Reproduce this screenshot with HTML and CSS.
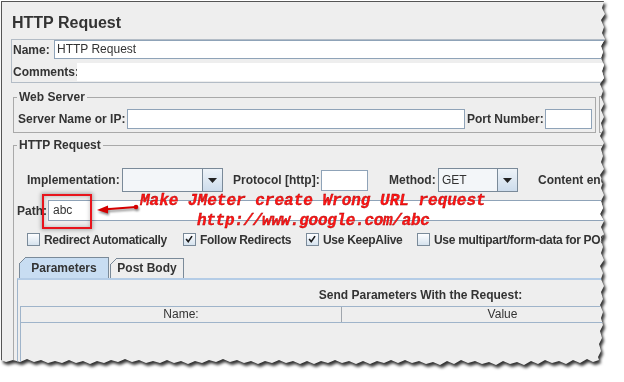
FILE: index.html
```html
<!DOCTYPE html>
<html>
<head>
<meta charset="utf-8">
<link rel="stylesheet" href="styles.css">
</head>
<body>
<div class="wrap">
  <div class="shot">
    <div class="title">HTTP Request</div>
    <div class="namepanel">
      <div class="nrow"><span class="lbl l-name">Name:</span><div class="tf name">HTTP Request</div></div>
      <div class="crow"><span class="lbl l-com">Comments:</span><div class="plain"></div></div>
    </div>
    <div class="servers">
      <fieldset class="grp web">
        <legend>Web Server</legend>
        <div class="srow">
          <span class="lbl l-srv">Server Name or IP:</span><div class="tf grow"></div>
          <span class="lbl l-port">Port Number:</span><div class="tf portf"></div>
        </div>
      </fieldset>
      <div class="timeo"></div>
    </div>
    <fieldset class="grp http">
      <legend>HTTP Request</legend>
      <div class="irow">
        <span class="lbl l-impl">Implementation:</span>
        <div class="combo impl"><div class="cval"></div><div class="cbtn"><svg width="9" height="5" viewBox="0 0 9 5"><path d="M0 0H9L4.5 5Z" fill="#222"/></svg></div></div>
        <span class="lbl l-proto">Protocol [http]:</span><div class="tf protof"></div>
        <span class="lbl l-meth">Method:</span>
        <div class="combo method"><div class="cval">GET</div><div class="cbtn"><svg width="9" height="5" viewBox="0 0 9 5"><path d="M0 0H9L4.5 5Z" fill="#222"/></svg></div></div>
        <span class="lbl l-enc">Content encoding:</span>
      </div>
      <div class="prow"><span class="lbl l-path">Path:</span><div class="tf path">abc</div></div>
      <div class="cbrow">
        <div class="cb cb1"><span class="box"></span>Redirect Automatically</div>
        <div class="cb cb2"><span class="box"><svg viewBox="0 0 13 13" width="11" height="11"><path d="M2.5 6 L5 9 L9.5 2.5" stroke="#1a1a1a" stroke-width="1.9" fill="none"/></svg></span>Follow Redirects</div>
        <div class="cb cb3"><span class="box"><svg viewBox="0 0 13 13" width="11" height="11"><path d="M2.5 6 L5 9 L9.5 2.5" stroke="#1a1a1a" stroke-width="1.9" fill="none"/></svg></span>Use KeepAlive</div>
        <div class="cb cb4"><span class="box"></span>Use multipart/form-data for POST</div>
      </div>
      <div class="tabs">
        <div class="tab sel">Parameters</div>
        <div class="tab t2">Post Body</div>
      </div>
      <div class="tabpanel">
        <div class="sendlbl">Send Parameters With the Request:</div>
        <div class="ptable">
          <div class="thead"><div class="th th1">Name:</div><div class="th th2">Value</div></div>
        </div>
      </div>
    </fieldset>

    <div class="redbox"></div>
    <svg class="arrow" width="48" height="16" viewBox="0 0 48 16">
      <path d="M3 10 L14 5.6 L14 13.6 Z" fill="#d40000"/>
      <path d="M12 9.3 L42 7" stroke="#d40000" stroke-width="2" fill="none"/>
      <circle cx="42" cy="7" r="2.3" fill="#d40000"/>
    </svg>
    <div class="note"><div>Make JMeter create Wrong URL request</div><div class="l2">http://www.google.com/abc</div></div>
  </div>
</div>
</body>
</html>
```
FILE: styles.css
```css
* { box-sizing: border-box; }
html, body { margin: 0; padding: 0; background: #fff; }
body {
  width: 624px; height: 382px; overflow: hidden;
  font-family: "Liberation Sans", Arial, sans-serif;
  font-size: 12px; color: #333;
}
.wrap { padding: 1px 0 0 1px; filter: drop-shadow(2px 3px 1.5px rgba(0,0,0,.8)); }
.shot {
  position: relative; width: 608px; height: 368px; background: #eeeeee;
  border-top: 1px solid #555; border-left: 1px solid #555;
  padding-top: 11px; overflow: hidden;
  clip-path: polygon(0 0, 603px 0, 601px 7px, 604px 13px, 600px 19px, 603px 26px, 601px 32px, 604px 38px, 600px 45px, 602px 51px, 600px 57px, 603px 64px, 601px 70px, 603px 77px, 599px 83px, 602px 90px, 600px 96px, 603px 103px, 600px 109px, 603px 116px, 600px 122px, 602px 129px, 599px 135px, 603px 142px, 600px 148px, 602px 155px, 600px 161px, 603px 168px, 599px 174px, 602px 181px, 600px 187px, 603px 194px, 600px 200px, 602px 207px, 599px 213px, 603px 220px, 600px 226px, 603px 233px, 600px 239px, 602px 246px, 600px 252px, 603px 259px, 599px 265px, 602px 272px, 600px 278px, 603px 285px, 600px 291px, 602px 298px, 599px 304px, 602px 311px, 600px 317px, 602px 324px, 599px 330px, 601px 337px, 598px 343px, 600px 350px, 597px 356px, 598px 359px,
    592px 361px, 586px 358px, 579px 362px, 572px 359px, 565px 363px, 558px 360px, 551px 362px, 544px 359px, 537px 363px, 530px 360px, 523px 364px, 516px 361px, 509px 363px, 502px 360px, 495px 364px, 488px 361px, 481px 363px, 474px 360px, 467px 362px, 460px 359px, 453px 363px, 446px 360px, 439px 364px, 432px 361px, 425px 363px, 418px 360px, 411px 362px, 404px 359px, 397px 362px, 390px 359px, 383px 362px, 376px 360px, 369px 363px, 362px 360px, 355px 363px, 348px 360px, 341px 362px, 334px 359px, 327px 362px, 320px 360px, 313px 363px, 306px 360px, 299px 363px, 292px 360px, 285px 362px, 278px 359px, 271px 362px, 264px 360px, 257px 363px, 250px 360px, 243px 362px, 236px 359px, 229px 361px, 222px 358px, 215px 361px, 208px 359px, 201px 362px, 194px 360px, 187px 363px, 180px 360px, 173px 362px, 166px 359px, 159px 362px, 152px 360px, 145px 362px, 138px 359px, 131px 361px, 124px 358px, 117px 361px, 110px 359px, 103px 362px, 96px 360px, 89px 363px, 82px 360px, 75px 362px, 68px 359px, 61px 362px, 54px 360px, 47px 362px, 40px 359px, 33px 361px, 26px 358px, 19px 361px, 12px 359px, 5px 361px, 0 359px);
}
.title { margin-left: 10px; height: 20px; line-height: 20px; font-size: 16px; font-weight: bold; }
.lbl { font-weight: bold; white-space: nowrap; flex: none; }
.tf { background: #fff; border: 1px solid #8fa3b8; flex: none; }

.namepanel { margin: 6px 0 0 9px; width: 640px; border: 1px solid #b3bcc6; padding: 0 0 1px 1px; }
.nrow { display: flex; align-items: center; height: 19px; }
.l-name { width: 41px; }
.name { flex: 1; height: 19px; padding-left: 2px; line-height: 17px; }
.crow { display: flex; align-items: center; height: 18px; margin-top: 4px; }
.l-com { width: 64px; }
.plain { flex: 1; height: 18px; background: #fff; }

.servers { display: flex; margin: 7px 0 0 11px; gap: 3px; }
fieldset.grp { padding: 0; border: 1px solid #a9a9a9; min-width: 0; }
.grp legend { margin-left: 3px; padding: 0 2px; font-weight: bold; line-height: 14px; font-size: 12px; }
fieldset.web { margin: 0; width: 583px; flex: none; padding-bottom: 3px; }
.timeo { width: 40px; flex: none; margin-top: 6px; height: 37px; border: 1px solid #a9a9a9; }
.srow { display: flex; align-items: center; height: 20px; margin-top: 5px; padding: 0 3px 0 4px; }
.l-srv { width: 109px; }
.grow { flex: 1; height: 20px; }
.l-port { width: 78px; margin-left: 2px; }
.portf { width: 47px; height: 20px; }

fieldset.http { margin: 5px 0 0 11px; width: 610px; height: 240px; }
.irow { display: flex; align-items: center; height: 24px; margin-top: 16px; padding-left: 13px; }
.l-impl { width: 95px; }
.combo { display: flex; height: 24px; border: 1px solid #7a8a99; background: #f3f6f9; flex: none; }
.cval { flex: 1; padding-left: 3px; line-height: 22px; }
.cbtn { width: 20px; border-left: 1px solid #7a8a99; background: linear-gradient(#eef3f8, #cddcec); display: flex; align-items: center; justify-content: center; }
.impl { width: 101px; }
.l-proto { width: 88px; margin-left: 10px; }
.protof { width: 47px; height: 21px; }
.l-meth { width: 49px; margin-left: 21px; }
.method { width: 80px; }
.l-enc { margin-left: 20px; }

.prow { display: flex; align-items: center; height: 21px; margin-top: 8px; padding-left: 3px; }
.l-path { width: 31px; }
.path { flex: 1; height: 21px; padding-left: 4px; line-height: 19px; }

.cbrow { display: flex; align-items: center; height: 17px; margin-top: 10px; padding-left: 13px; }
.cb { display: flex; align-items: center; flex: none; font-weight: bold; font-size: 12px; letter-spacing: -0.3px; white-space: nowrap; }
.cb1 { width: 156px; }
.cb2 { width: 123px; }
.cb3 { width: 111px; }
.box { width: 13px; height: 13px; border: 1px solid #7a8a99; background: linear-gradient(#fdfeff, #d6e2ee); margin-right: 4px; display: flex; align-items: center; justify-content: center; }

.tabs { display: flex; align-items: flex-end; height: 21px; margin-top: 9px; padding-left: 5px; gap: 1px; }
.tab { position: relative; height: 21px; border: 1px solid #7a8a99; border-bottom: none; font-weight: bold; text-align: center; line-height: 20px; background: #eeeeee; }
.tab::before { content: ""; position: absolute; top: -1px; left: -1px; width: 7px; height: 7px; background: linear-gradient(to bottom right, #eeeeee 0 calc(50% - 0.7px), #7a8a99 calc(50% - 0.7px) calc(50% + 0.6px), transparent calc(50% + 0.6px)); }
.sel { width: 90px; background: #c8ddf2; }
.t2 { width: 74px; height: 20px; line-height: 19px; }

.tabpanel { margin-left: 3px; width: 806px; height: 100px; border-top: 2px solid #b4cce6; border-left: 1px solid #9fb4ca; padding-top: 8px; }
.sendlbl { text-align: center; font-weight: bold; line-height: 14px; }
.ptable { margin: 4px 0 0 2px; width: 643px; height: 70px; border-left: 1px solid #9fb4ca; border-top: 1px solid #9fb4ca; }
.thead { display: flex; height: 16px; border-bottom: 1px solid #9fb4ca; }
.th { text-align: center; line-height: 15px; }
.th1 { width: 321px; border-right: 1px solid #a0a6ad; }
.th2 { flex: 1; }

.redbox { position: absolute; left: 40px; top: 192px; width: 50px; height: 35px; border: 2px solid #e8141c; box-shadow: 0 0 4px 1px rgba(0,0,0,.3), inset 0 0 4px rgba(0,0,0,.25); }
.arrow { position: absolute; left: 92px; top: 198px; filter: drop-shadow(1px 2px 1px rgba(0,0,0,.45)); }
.note { position: absolute; left: 138px; top: 189px; font-family: "Liberation Mono", monospace; font-style: italic; font-weight: bold; font-size: 16px; line-height: 20px; color: #ff1414; white-space: pre; -webkit-text-stroke: 0.3px #a00000; }
.note .l2 { padding-left: 57px; letter-spacing: -0.3px; }
```
